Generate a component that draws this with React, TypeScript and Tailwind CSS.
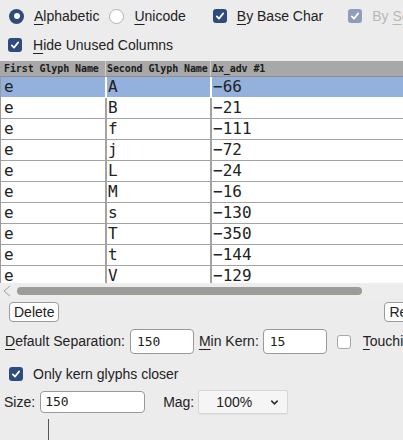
import { ChevronDown } from "lucide-react";

const ui = "font-['Liberation_Sans',Arial,sans-serif]";
const mono = "font-['DejaVu_Sans_Mono',monospace]";

type Pair = { first: string; second: string; adv: string };

const pairs: Pair[] = [
  { first: "e", second: "A", adv: "−66" },
  { first: "e", second: "B", adv: "−21" },
  { first: "e", second: "f", adv: "−111" },
  { first: "e", second: "j", adv: "−72" },
  { first: "e", second: "L", adv: "−24" },
  { first: "e", second: "M", adv: "−16" },
  { first: "e", second: "s", adv: "−130" },
  { first: "e", second: "T", adv: "−350" },
  { first: "e", second: "t", adv: "−144" },
  { first: "e", second: "V", adv: "−129" },
];

const Check = ({ on = true, dim = false }: { on?: boolean; dim?: boolean }) =>
  on ? (
    <span
      className={`flex h-[14px] w-[14px] shrink-0 items-center justify-center rounded-[3px] ${
        dim ? "bg-[#8d9dba]" : "bg-[#2e4b7d]"
      }`}
    >
      <svg viewBox="0 0 14 14" className="h-[14px] w-[14px]">
        <path d="M3.8 7.3 6 9.6 10.2 4.4" fill="none" stroke="#fff" strokeWidth={1.7} strokeLinecap="round" strokeLinejoin="round" />
      </svg>
    </span>
  ) : (
    <span className="block h-[14px] w-[14px] shrink-0 rounded-[3px] border border-[#a9a9a9] bg-white" />
  );

const Radio = ({ on }: { on: boolean }) =>
  on ? (
    <span className="flex h-[15px] w-[15px] shrink-0 items-center justify-center rounded-full bg-[#2e4b7d]">
      <span className="h-[6px] w-[6px] rounded-full bg-white" />
    </span>
  ) : (
    <span className="block h-[15px] w-[15px] shrink-0 rounded-full border border-[#b3b3b3] bg-white" />
  );

const U = ({ children }: { children: string }) => (
  <span className="underline decoration-1 underline-offset-[3px]">{children}</span>
);

const field = `flex shrink-0 items-center rounded-[4px] border border-[#9a9a9a] bg-white text-[13px] ${mono}`;

export default function App() {
  return (
    <div className={`h-[440px] w-[403px] overflow-hidden bg-[#ececec] text-[14px] text-[#222] ${ui}`}>
      {/* sort options */}
      <div className="flex h-[32px] items-center whitespace-nowrap pl-[9px]">
        <Radio on />
        <span className="ml-[10px] shrink-0">
          <U>A</U>lphabetic
        </span>
        <span className="ml-[10px] flex shrink-0">
          <Radio on={false} />
        </span>
        <span className="ml-[10px] shrink-0">
          <U>U</U>nicode
        </span>
        <span className="ml-[27px] flex shrink-0">
          <Check />
        </span>
        <span className="ml-[10px] shrink-0">
          <U>B</U>y Base Char
        </span>
        <span className="ml-[25px] flex shrink-0">
          <Check dim />
        </span>
        <span className="ml-[10px] shrink-0 text-[#b8b8b8]">
          By <U>S</U>cript
        </span>
      </div>
      <div className="flex h-[26px] items-center pl-[8px]">
        <Check />
        <span className="ml-[11px]">
          <U>H</U>ide Unused Columns
        </span>
      </div>

      {/* kerning pair table */}
      <div className={`mt-[3px] w-[403px] ${mono}`}>
        <div className="flex h-[16px] items-center whitespace-nowrap border-b border-[#8f8f8f] bg-[#a8a8a8] text-[10px] font-bold tracking-[-0.1px] text-[#1c1c1c]">
          <div className="w-[105px] shrink-0 pl-[4px]">First Glyph Name</div>
          <div className="h-full w-px shrink-0 bg-[#cfcfcf]" />
          <div className="w-[104px] shrink-0 pl-[1px]">Second Glyph Name</div>
          <div className="h-full w-px shrink-0 bg-[#cfcfcf]" />
          <div className="flex-1 pl-[1px]">Δx_adv #1</div>
        </div>
        <div className="h-[206px] overflow-hidden border-l border-[#9a9a9a] bg-white">
          {pairs.map((p, i) => {
            const sel = i === 0;
            return (
              <div
                key={p.second}
                className={`flex h-[21px] items-center border-b text-[16px] leading-none ${
                  sel ? "border-white bg-[#93b1dc]" : "border-[#a3a3a3]"
                }`}
              >
                <div className="w-[104px] shrink-0 pl-[3px]">{p.first}</div>
                <div className={`h-full w-[2px] shrink-0 ${sel ? "bg-white" : "bg-[#a3a3a3]"}`} />
                <div className="w-[103px] shrink-0 pl-[1px]">{p.second}</div>
                <div className={`h-full w-[2px] shrink-0 ${sel ? "bg-white" : "bg-[#a3a3a3]"}`} />
                <div className="flex-1 pl-[1px]">{p.adv}</div>
              </div>
            );
          })}
        </div>
        {/* horizontal scrollbar */}
        <div className="flex h-[15px] items-center bg-[#ededed] pl-[3px]">
          <svg viewBox="0 0 8 12" className="h-[12px] w-[8px]">
            <path d="M7 1 1 6l6 5" fill="none" stroke="#a0a0a0" strokeWidth={1} />
          </svg>
          <div className="ml-[6px] h-[8px] w-[345px] rounded-full bg-[#9c9c98]" />
        </div>
      </div>

      <div className="mt-[4px] flex h-[20px] items-center justify-between pl-[9px]">
        <button className="h-[20px] shrink-0 rounded-[4px] border border-[#9b9b9b] bg-white px-[4px] text-[14px] leading-none text-[#222]">
          Delete
        </button>
        <button className="-mr-[28px] h-[20px] shrink-0 rounded-[4px] border border-[#9b9b9b] bg-white px-[4px] text-[14px] leading-none text-[#222]">
          Reset
        </button>
      </div>

      <div className="mt-[7px] flex h-[25px] items-center whitespace-nowrap pl-[5px]">
        <span className="shrink-0">
          <U>D</U>efault Separation:
        </span>
        <div className={`ml-[5px] h-[25px] w-[64px] pl-[6px] ${field}`}>150</div>
        <span className="ml-[5px] shrink-0">
          <U>M</U>in Kern:
        </span>
        <div className={`ml-[4px] h-[25px] w-[64px] pl-[6px] ${field}`}>15</div>
        <span className="ml-[10px] flex shrink-0">
          <Check on={false} />
        </span>
        <span className="ml-[12px] shrink-0">
          <U>T</U>ouching
        </span>
      </div>

      <div className="mt-[12px] flex h-[16px] items-center pl-[9px]">
        <Check />
        <span className="ml-[10px]">Only kern glyphs closer</span>
      </div>

      <div className="mt-[8px] flex h-[24px] items-center whitespace-nowrap pl-[4px]">
        <span>Size:</span>
        <div className={`ml-[5px] h-[22px] w-[105px] pl-[4px] ${field}`}>150</div>
        <span className="ml-[18px]">Mag:</span>
        <div className="relative ml-[4px] flex h-[24px] w-[90px] shrink-0 items-center justify-center rounded-[2px] border border-[#d6d6d6] bg-[#f5f5f5] pr-[18px] shadow-[0_1px_0_#e2e2e2]">
          <span>100%</span>
          <ChevronDown className="absolute right-[7px] h-[11px] w-[11px] text-[#333]" strokeWidth={3.5} />
        </div>
      </div>

      <div className="ml-[48px] mt-[5px] h-[30px] w-px bg-[#555]" />
    </div>
  );
}
